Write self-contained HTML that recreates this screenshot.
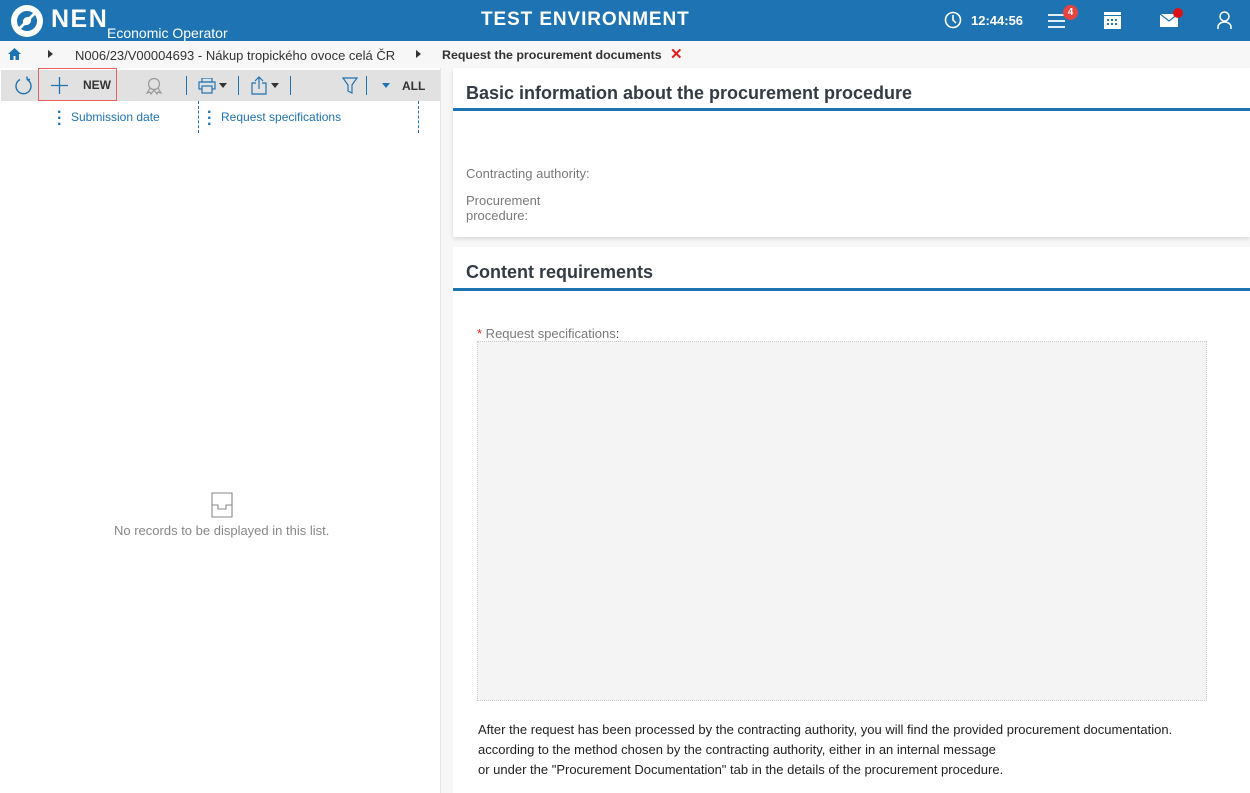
<!DOCTYPE html>
<html><head><meta charset="utf-8"><style>
*{box-sizing:border-box;margin:0;padding:0}
body{width:1250px;height:793px;overflow:hidden;background:#f7f7f7;font-family:"Liberation Sans",sans-serif;position:relative}
.a{position:absolute}
#hdr{left:0;top:0;width:1250px;height:41px;background:#1e74b3;color:#fff}
#left{left:0;top:68px;width:441px;height:725px;background:#fff;border-right:1px solid #e4e4e4}
#tb{left:1px;top:70px;width:439px;height:31px;background:#e1e1e1}
.sep{position:absolute;top:6px;width:1px;height:19px;background:#1e74b3}
.card{background:#fff;left:453px;width:797px}
h2{font-size:18px;font-weight:bold;color:#333b44;position:absolute;left:13px}
.bl{position:absolute;left:0;width:797px;height:3px;background:#1e74b3}
.lbl{font-size:13px;color:#7a7a7a;position:absolute;left:13px}
</style></head><body>
<div id="hdr" class="a">
 <svg class="a" style="left:10px;top:4px" width="34" height="34" viewBox="0 0 34 34"><circle cx="17" cy="17" r="16" fill="#fff"/><path d="M9 23 A10 10 0 0 1 23 9 L19 13 A5 5 0 0 0 13 19 Z M25 11 A10 10 0 0 1 11 25 L15 21 A5 5 0 0 0 21 15Z" fill="#1e74b3"/></svg>
 <div class="a" style="left:51px;top:5px;font-size:25px;font-weight:bold;letter-spacing:1.5px">NEN</div>
 <div class="a" style="left:107px;top:25px;font-size:14px">Economic Operator</div>
 <div class="a" style="left:481px;top:9px;font-size:19px;font-weight:bold;letter-spacing:.9px">TEST ENVIRONMENT</div>
 <svg class="a" style="left:944px;top:11px" width="18" height="18" viewBox="0 0 18 18"><circle cx="9" cy="9" r="7.5" fill="none" stroke="#fff" stroke-width="1.6"/><path d="M9 4v5l3 3" fill="none" stroke="#fff" stroke-width="1.6"/></svg>
 <div class="a" style="left:971px;top:13px;font-size:13px;font-weight:bold">12:44:56</div>
 <svg class="a" style="left:1048px;top:13px" width="18" height="16"><path d="M0 2h17M0 8h17M0 14h17" stroke="#fff" stroke-width="1.8"/></svg>
 <div class="a" style="left:1063px;top:5px;width:15px;height:15px;border-radius:50%;background:#e8443f;font-size:10px;font-weight:bold;text-align:center;line-height:15px">4</div>
 <svg class="a" style="left:1104px;top:12px" width="17" height="17"><rect x="0" y="0" width="17" height="17" fill="#fff"/><rect x="0" y="3" width="17" height="1" fill="#1e74b3"/><g fill="#1e74b3"><rect x="3" y="7" width="2" height="2"/><rect x="7" y="7" width="2" height="2"/><rect x="11" y="7" width="2" height="2"/><rect x="3" y="11" width="2" height="2"/><rect x="7" y="11" width="2" height="2"/><rect x="11" y="11" width="2" height="2"/></g></svg>
 <svg class="a" style="left:1160px;top:14px" width="18" height="13"><rect width="18" height="13" fill="#fff"/><path d="M0 0l9 7 9-7" fill="none" stroke="#1e74b3" stroke-width="1.2"/></svg>
 <div class="a" style="left:1173px;top:8px;width:10px;height:10px;border-radius:50%;background:#d8141a"></div>
 <svg class="a" style="left:1217px;top:11px" width="15" height="18"><circle cx="7.5" cy="5.5" r="4.5" fill="none" stroke="#fff" stroke-width="1.5"/><path d="M1 18v-2a6.5 5 0 0 1 13 0v2" fill="none" stroke="#fff" stroke-width="1.5"/></svg>
</div>
<svg class="a" style="left:8px;top:48px" width="13" height="13"><path d="M6.5 0L0 6h2v6h3.5V8h2v4H11V6h2z" fill="#1e74b3"/></svg>
<div class="a" style="left:48px;top:50px;border-left:5px solid #333;border-top:4px solid transparent;border-bottom:4px solid transparent"></div>
<div class="a" style="left:75px;top:48px;font-size:13px;color:#333">N006/23/V00004693 - Nákup tropického ovoce celá ČR</div>
<div class="a" style="left:416px;top:50px;border-left:5px solid #333;border-top:4px solid transparent;border-bottom:4px solid transparent"></div>
<div class="a" style="left:442px;top:48px;font-size:12.4px;color:#333;font-weight:bold">Request the procurement documents</div>
<div class="a" style="left:670px;top:45px;font-size:15px;color:#e02020;font-weight:bold">✕</div>
<div id="left" class="a"></div>
<div id="tb" class="a">
 <svg class="a" style="left:13px;top:6px" width="19" height="19"><path d="M13 3.5A7.5 7.5 0 1 1 6 3.5M13 3.5V0.5M13 3.5h3" fill="none" stroke="#1e74b3" stroke-width="1.4"/></svg>
 <div class="a" style="left:37px;top:-2px;width:79px;height:33px;border:1.5px solid #e86060"></div>
 <svg class="a" style="left:50px;top:7px" width="17" height="17"><path d="M8.5 0v17M0 8.5h17" stroke="#1e74b3" stroke-width="1.3"/></svg>
 <div class="a" style="left:82px;top:8px;font-size:12px;font-weight:bold;color:#333">NEW</div>
 <svg class="a" style="left:144px;top:7px" width="18" height="18"><circle cx="9" cy="7" r="5.5" fill="none" stroke="#999" stroke-width="1.2"/><path d="M5 11l-3 5 3-1 1 2 3-4 3 4 1-2 3 1-3-5" fill="none" stroke="#999" stroke-width="1.2"/></svg>
 <div class="sep" style="left:185px"></div>
 <svg class="a" style="left:197px;top:8px" width="18" height="16"><rect x="4" y="0" width="10" height="4" fill="none" stroke="#1e74b3" stroke-width="1.2"/><rect x="1" y="4" width="16" height="7" fill="none" stroke="#1e74b3" stroke-width="1.2"/><rect x="4" y="8" width="10" height="7" fill="#e1e1e1" stroke="#1e74b3" stroke-width="1.2"/></svg>
 <div class="a" style="left:218px;top:13px;border-top:5px solid #333;border-left:4px solid transparent;border-right:4px solid transparent"></div>
 <div class="sep" style="left:237px"></div>
 <svg class="a" style="left:250px;top:6px" width="16" height="19"><path d="M5 7H1v11h14V7h-4M8 13V1M4 5l4-4 4 4" fill="none" stroke="#1e74b3" stroke-width="1.2"/></svg>
 <div class="a" style="left:270px;top:13px;border-top:5px solid #333;border-left:4px solid transparent;border-right:4px solid transparent"></div>
 <div class="sep" style="left:289px"></div>
 <svg class="a" style="left:341px;top:7px" width="16" height="17"><path d="M1 1h14l-5 7v8l-4-2V8z" fill="none" stroke="#1e74b3" stroke-width="1.2"/></svg>
 <div class="sep" style="left:365px"></div>
 <div class="a" style="left:381px;top:13px;border-top:5px solid #1e74b3;border-left:4px solid transparent;border-right:4px solid transparent"></div>
 <div class="a" style="left:401px;top:9px;font-size:12px;font-weight:bold;color:#333">ALL</div>
</div>
<div class="a" style="left:57px;top:110px;font-size:16px;color:#1e74b3;line-height:6px;font-weight:bold">·<br>·<br>·</div>
<div class="a" style="left:71px;top:110px;font-size:12px;color:#1e74b3">Submission date</div>
<div class="a" style="left:198px;top:101px;height:32px;border-left:1px dashed #1e74b3"></div>
<div class="a" style="left:207px;top:110px;font-size:16px;color:#1e74b3;line-height:6px;font-weight:bold">·<br>·<br>·</div>
<div class="a" style="left:221px;top:110px;font-size:12px;color:#1e74b3">Request specifications</div>
<div class="a" style="left:418px;top:101px;height:32px;border-left:1px dashed #1e74b3"></div>
<svg class="a" style="left:209px;top:492px" width="26" height="26"><path d="M3 1h20v24H3zM3 13h6v4h8v-4h6" fill="none" stroke="#888" stroke-width="1.1"/></svg>
<div class="a" style="left:114px;top:523px;font-size:13px;color:#888">No records to be displayed in this list.</div>
<div class="card a" style="top:68px;height:169px;box-shadow:0 2px 4px rgba(0,0,0,.12)">
 <h2 style="top:15px">Basic information about the procurement procedure</h2>
 <div class="bl" style="top:40px"></div>
 <div class="lbl" style="top:98px">Contracting authority:</div>
 <div class="lbl" style="top:125px;line-height:15px">Procurement<br>procedure:</div>
</div>
<div class="card a" style="top:247px;height:546px">
 <h2 style="top:15px">Content requirements</h2>
 <div class="bl" style="top:41px"></div>
 <div class="a" style="left:24px;top:79px;font-size:13px;color:#7a7a7a"><span style="color:#e02020">*</span> Request specifications<span style="color:#333">:</span></div>
 <div class="a" style="left:24px;top:94px;width:730px;height:360px;background:#f4f4f4;border:1px dotted #ccc"></div>
 <div class="a" style="left:25px;top:473px;font-size:13px;color:#222;line-height:20px">After the request has been processed by the contracting authority, you will find the provided procurement documentation.<br>according to the method chosen by the contracting authority, either in an internal message<br>or under the "Procurement Documentation" tab in the details of the procurement procedure.</div>
</div>
</body></html>
